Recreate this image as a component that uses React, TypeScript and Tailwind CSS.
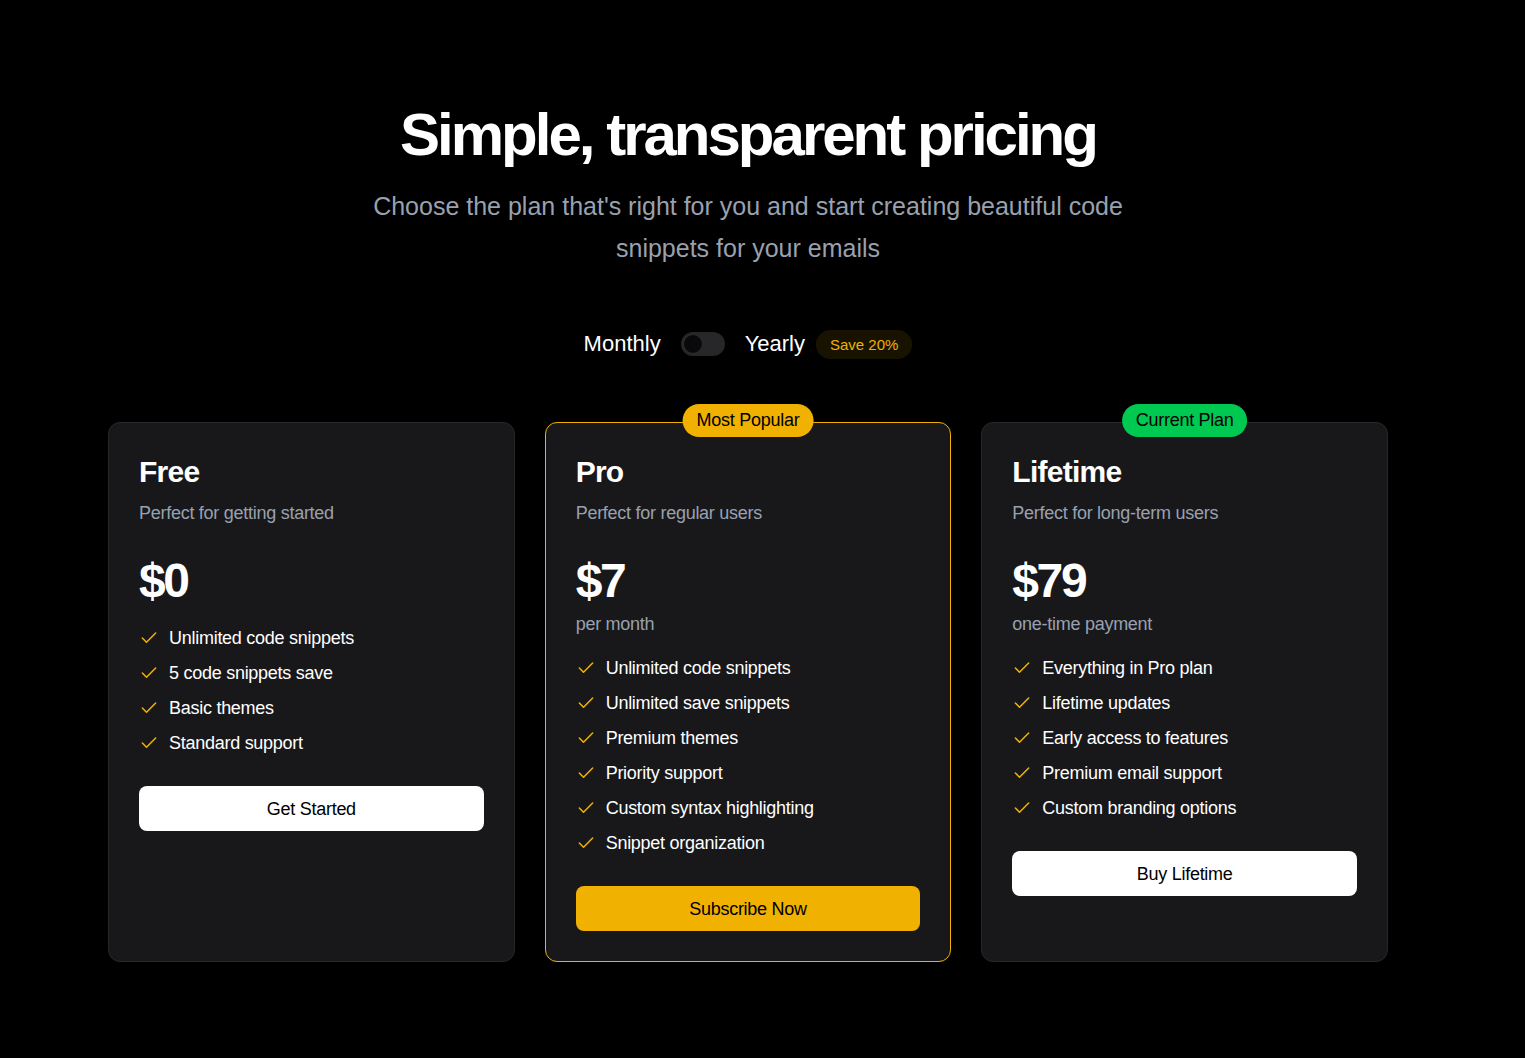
import { Check } from "lucide-react";

type Plan = {
	name: string;
	blurb: string;
	price: string;
	note?: string;
	features: string[];
	cta: string;
	badge?: { label: string; className: string };
	highlight?: boolean;
};

const plans: Plan[] = [
	{
		name: "Free",
		blurb: "Perfect for getting started",
		price: "$0",
		features: [
			"Unlimited code snippets",
			"5 code snippets save",
			"Basic themes",
			"Standard support",
		],
		cta: "Get Started",
	},
	{
		name: "Pro",
		blurb: "Perfect for regular users",
		price: "$7",
		note: "per month",
		features: [
			"Unlimited code snippets",
			"Unlimited save snippets",
			"Premium themes",
			"Priority support",
			"Custom syntax highlighting",
			"Snippet organization",
		],
		cta: "Subscribe Now",
		badge: { label: "Most Popular", className: "bg-yellow-500" },
		highlight: true,
	},
	{
		name: "Lifetime",
		blurb: "Perfect for long-term users",
		price: "$79",
		note: "one-time payment",
		features: [
			"Everything in Pro plan",
			"Lifetime updates",
			"Early access to features",
			"Premium email support",
			"Custom branding options",
		],
		cta: "Buy Lifetime",
		badge: { label: "Current Plan", className: "bg-green-500" },
	},
];

const PlanCard = ({ plan }: { plan: Plan }) => (
	<div
		className={`relative rounded-xl border bg-zinc-900 p-[30px] ${
			plan.highlight ? "border-yellow-500" : "border-zinc-800"
		}`}
	>
		{plan.badge && (
			<span
				className={`absolute -top-[19px] left-1/2 -translate-x-1/2 whitespace-nowrap rounded-full px-3.5 py-[2px] text-lg leading-[29px] tracking-[-0.015em] text-black ${plan.badge.className}`}
			>
				{plan.badge.label}
			</span>
		)}
		<h3 className="pt-px font-bold text-3xl text-white tracking-tight">{plan.name}</h3>
		<p className="mt-[9px] text-gray-400 text-lg tracking-[-0.015em]">{plan.blurb}</p>

		<div className="mt-[30px] font-bold text-5xl text-white leading-none tracking-tighter">
			{plan.price}
		</div>
		{plan.note && (
			<p className="mt-[5px] text-gray-400 text-lg tracking-[-0.015em]">{plan.note}</p>
		)}

		<ul className={`flex flex-col gap-[7px] ${plan.note ? "mt-4" : "mt-[19px]"}`}>
			{plan.features.map((f) => (
				<li key={f} className="flex items-center gap-2.5 text-lg text-white tracking-[-0.015em]">
					<Check className="h-5 w-5 shrink-0 text-yellow-500" strokeWidth={1.8} />
					{f}
				</li>
			))}
		</ul>

		<button
			type="button"
			className={`mt-[29px] h-[45px] w-full rounded-lg text-black text-lg tracking-[-0.015em] ${
				plan.highlight ? "bg-yellow-500" : "bg-white"
			}`}
		>
			{plan.cta}
		</button>
	</div>
);

export default function App() {
	return (
		<div className="min-h-screen bg-black pr-[29px] pt-[105px] pb-24 font-['Liberation_Sans',Arial,sans-serif]">
			<div className="text-center">
				<h1 className="font-bold text-6xl text-white leading-none tracking-tighter">
					Simple, transparent pricing
				</h1>
				<p className="mx-auto mt-5 max-w-3xl text-[25px] text-gray-400 leading-[42px]">
					Choose the plan that's right for you and start creating beautiful code snippets for
					your emails
				</p>
			</div>

			{/* billing toggle */}
			<div className="mt-[60px] flex items-center justify-center gap-5">
				<span className="text-[22px] text-white leading-[30px]">Monthly</span>
				<div className="flex h-6 w-11 items-center rounded-full bg-zinc-800 px-0.5">
					<div className="h-5 w-5 rounded-full border border-zinc-700/60 bg-zinc-950" />
				</div>
				<div className="flex items-center gap-[11px]">
					<span className="text-[22px] text-white leading-[30px]">Yearly</span>
					<span className="rounded-full bg-yellow-500/10 px-3.5 py-1 text-[15px] text-yellow-500 leading-[21px]">
						Save 20%
					</span>
				</div>
			</div>

			<div className="mx-auto mt-[63px] grid max-w-7xl grid-cols-3 gap-[30px]">
				{plans.map((p) => (
					<PlanCard key={p.name} plan={p} />
				))}
			</div>
		</div>
	);
}
